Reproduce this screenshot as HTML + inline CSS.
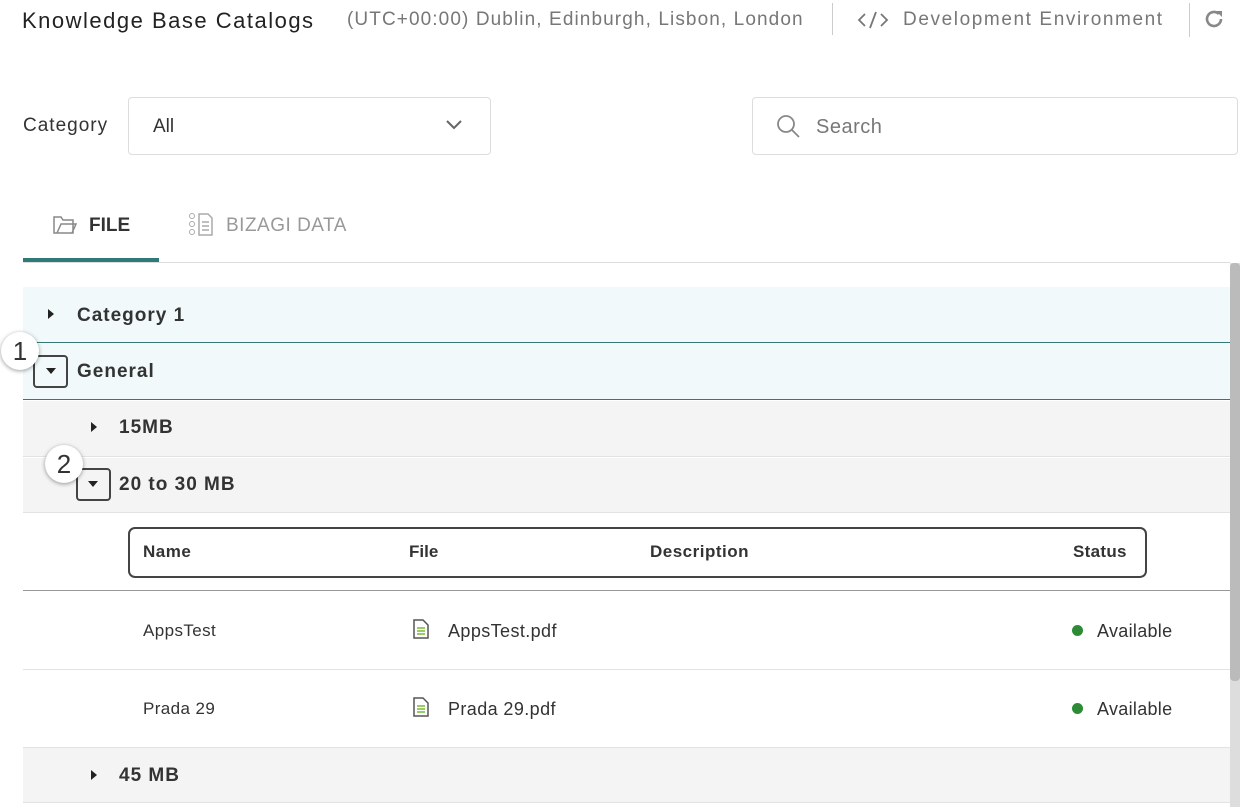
<!DOCTYPE html>
<html><head><meta charset="utf-8"><style>
*{box-sizing:border-box;margin:0;padding:0}
body{width:1243px;height:807px;overflow:hidden;background:#fff;font-family:"Liberation Sans",sans-serif;color:#333;position:relative}
.a{position:absolute;white-space:nowrap}
.b{font-weight:bold}
.r{letter-spacing:1px}
.row{position:absolute;left:23px;width:1207px}
.tri{position:absolute;width:0;height:0;border-top:5px solid transparent;border-bottom:5px solid transparent;border-left:6px solid #222}
.dn{position:absolute;width:0;height:0;border-left:5px solid transparent;border-right:5px solid transparent;border-top:6px solid #222}
.box{position:absolute;border:2.5px solid #444;border-radius:4px;background:transparent}
.num{position:absolute;width:38px;height:38px;border-radius:50%;background:#fff;box-shadow:0 1px 4px rgba(0,0,0,.4);font-size:26px;text-align:center;line-height:38px;color:#333}
</style></head><body>
<div class="a" style="left:22px;top:8px;font-size:22px;color:#222;letter-spacing:1.5px">Knowledge Base Catalogs</div>
<div class="a" style="left:347px;top:9px;font-size:19px;color:#777;letter-spacing:1.1px">(UTC+00:00) Dublin, Edinburgh, Lisbon, London</div>
<div class="a" style="left:832px;top:3px;width:1px;height:32px;background:#ccc"></div>
<svg class="a" style="left:857px;top:10px" width="32" height="20"><path d="M8 4L2 10l6 6M24 4l6 6-6 6M19 2l-6 16" fill="none" stroke="#777" stroke-width="1.8"/></svg>
<div class="a" style="left:903px;top:9px;font-size:19px;color:#777;letter-spacing:1.6px">Development Environment</div>
<div class="a" style="left:1189px;top:3px;width:1px;height:34px;background:#ccc"></div>
<svg class="a" style="left:1203px;top:8px" width="22" height="22" viewBox="0 0 22 22"><path d="M18 11a7 7 0 1 1-2.2-5.1" fill="none" stroke="#888" stroke-width="2.6"/><path d="M13 3h6v6z" fill="#888"/></svg>

<div class="a" style="left:23px;top:115px;font-size:19px;color:#333;letter-spacing:1px">Category</div>
<div class="a" style="left:128px;top:97px;width:363px;height:58px;border:1px solid #ddd;border-radius:4px"></div>
<div class="a" style="left:153px;top:116px;font-size:19px">All</div>
<svg class="a" style="left:445px;top:119px" width="18" height="12"><path d="M2 2l7 7 7-7" fill="none" stroke="#666" stroke-width="2"/></svg>
<div class="a" style="left:752px;top:97px;width:486px;height:58px;border:1px solid #ddd;border-radius:4px"></div>
<svg class="a" style="left:776px;top:114px" width="26" height="26"><circle cx="10" cy="10" r="8" fill="none" stroke="#888" stroke-width="1.8"/><path d="M16 16l7 7" stroke="#888" stroke-width="1.8"/></svg>
<div class="a" style="left:816px;top:116px;font-size:20px;color:#777;letter-spacing:0.5px">Search</div>

<svg class="a" style="left:52px;top:213px" width="26" height="22"><path d="M2 20V4h7l2 3h10v13z M5 20l4-9h15l-4 9" fill="none" stroke="#888" stroke-width="1.5"/></svg>
<div class="a b" style="left:89px;top:215px;font-size:19px;color:#333">FILE</div>
<svg class="a" style="left:188px;top:212px" width="26" height="24"><circle cx="4" cy="4" r="2.5" fill="none" stroke="#aaa"/><circle cx="4" cy="12" r="2.5" fill="none" stroke="#aaa"/><circle cx="4" cy="20" r="2.5" fill="none" stroke="#aaa"/><path d="M11 2h9l4 4v17H11z M14 10h7 M14 14h7 M14 18h7" fill="none" stroke="#aaa" stroke-width="1.5"/></svg>
<div class="a" style="left:226px;top:215px;font-size:19px;color:#999;letter-spacing:0.5px">BIZAGI DATA</div>
<div class="a" style="left:23px;top:262px;width:1207px;height:1px;background:#ddd"></div>
<div class="a" style="left:23px;top:258px;width:136px;height:4px;background:#2f7a76"></div>

<div class="row" style="top:287px;height:56px;background:#f1f9fb;border-bottom:1px solid #2f7a76"></div>
<div class="tri" style="left:48px;top:309px"></div>
<div class="a b r" style="left:77px;top:305px;font-size:19px">Category 1</div>
<div class="row" style="top:344px;height:56px;background:#f1f9fb;border-bottom:1px solid #2f7a76"></div>
<div class="dn" style="left:46px;top:368px"></div>
<div class="box" style="left:33px;top:355px;width:35px;height:33px"></div>
<div class="a b r" style="left:77px;top:361px;font-size:19px">General</div>
<div class="num" style="left:1px;top:332px">1</div>

<div class="row" style="top:401px;height:56px;background:#f4f4f4;border-bottom:1px solid #e2e2e2"></div>
<div class="tri" style="left:91px;top:422px"></div>
<div class="a b r" style="left:119px;top:417px;font-size:19px">15MB</div>
<div class="row" style="top:458px;height:55px;background:#f4f4f4;border-bottom:1px solid #e2e2e2"></div>
<div class="dn" style="left:88px;top:481px"></div>
<div class="box" style="left:76px;top:468px;width:35px;height:33px"></div>
<div class="a b r" style="left:119px;top:474px;font-size:19px">20 to 30 MB</div>
<div class="num" style="left:45px;top:445px">2</div>

<div class="row" style="top:590px;height:1px;background:#999"></div>
<div class="box" style="left:128px;top:527px;width:1019px;height:51px;border-radius:7px"></div>
<div class="a b" style="left:143px;top:542px;font-size:17px;letter-spacing:0.5px">Name</div>
<div class="a b" style="left:409px;top:542px;font-size:17px">File</div>
<div class="a b" style="left:650px;top:542px;font-size:17px;letter-spacing:0.5px">Description</div>
<div class="a b" style="left:1073px;top:542px;font-size:17px;letter-spacing:0.3px">Status</div>

<div class="row" style="top:669px;height:1px;background:#e2e2e2"></div>
<div class="a" style="left:143px;top:621px;font-size:17px;letter-spacing:0.4px">AppsTest</div>
<svg class="a" style="left:413px;top:619px" width="16" height="20"><path d="M1 1h9l5 5v13H1z" fill="#fff" stroke="#555" stroke-width="1.5"/><path d="M4 9h8M4 12h8M4 15h8" stroke="#9c6" stroke-width="2"/></svg>
<div class="a" style="left:448px;top:621px;font-size:18px;letter-spacing:0.4px">AppsTest.pdf</div>
<div class="a" style="left:1072px;top:625px;width:11px;height:11px;border-radius:50%;background:#2e8b35"></div>
<div class="a" style="left:1097px;top:621px;font-size:18px;letter-spacing:0.3px">Available</div>

<div class="a" style="left:143px;top:699px;font-size:17px;letter-spacing:0.4px">Prada 29</div>
<svg class="a" style="left:413px;top:697px" width="16" height="20"><path d="M1 1h9l5 5v13H1z" fill="#fff" stroke="#555" stroke-width="1.5"/><path d="M4 9h8M4 12h8M4 15h8" stroke="#9c6" stroke-width="2"/></svg>
<div class="a" style="left:448px;top:699px;font-size:18px;letter-spacing:0.4px">Prada 29.pdf</div>
<div class="a" style="left:1072px;top:703px;width:11px;height:11px;border-radius:50%;background:#2e8b35"></div>
<div class="a" style="left:1097px;top:699px;font-size:18px;letter-spacing:0.3px">Available</div>

<div class="row" style="top:747px;height:56px;background:#f4f4f4;border-top:1px solid #e2e2e2;border-bottom:1px solid #e2e2e2"></div>
<div class="tri" style="left:91px;top:770px"></div>
<div class="a b r" style="left:119px;top:765px;font-size:19px">45 MB</div>

<div class="a" style="left:1230px;top:263px;width:10px;height:544px;background:#ddd"></div>
<div class="a" style="left:1230px;top:263px;width:10px;height:418px;background:#bbb;border-radius:4px"></div>
</body></html>
